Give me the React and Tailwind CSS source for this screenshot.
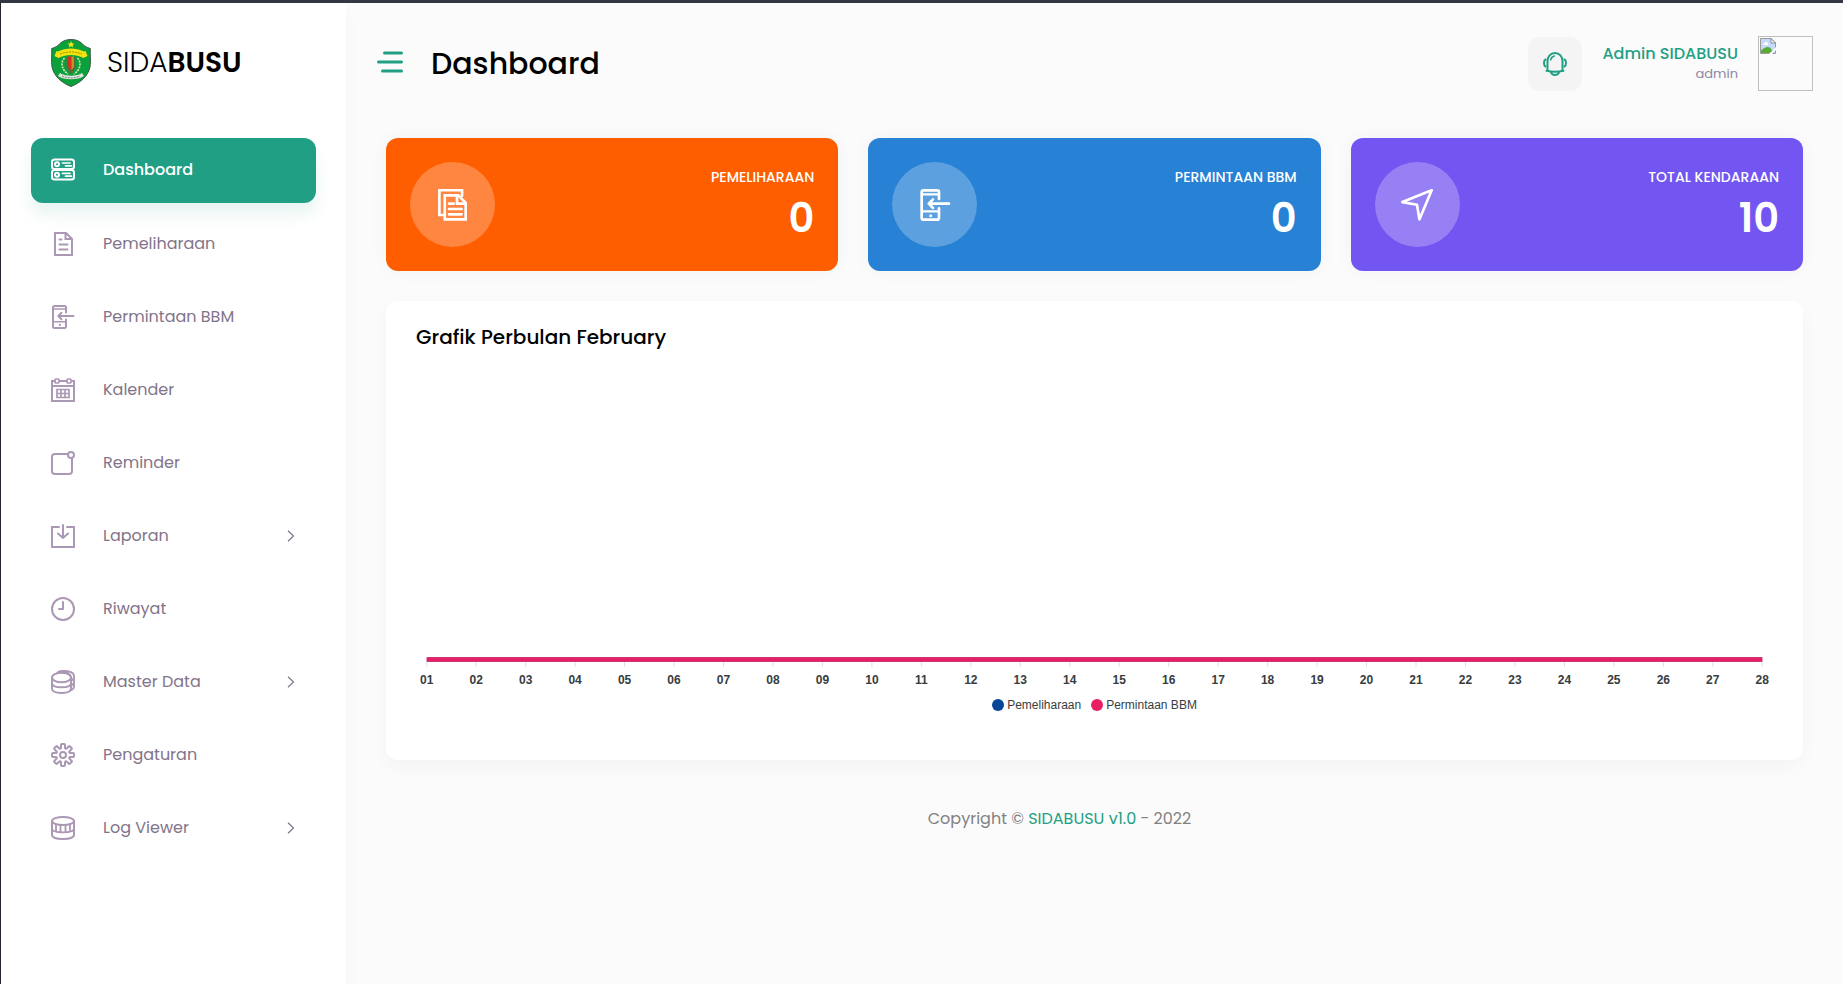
import React from "react";

const icon = {
  width: 24,
  height: 24,
  viewBox: "0 0 24 24",
  fill: "none",
  stroke: "currentColor",
  strokeWidth: 2,
  strokeLinecap: "round",
  strokeLinejoin: "round",
  "aria-hidden": true,
};

function ServerIcon() {
  return (
    <svg {...icon}>
      <rect x="1" y="1.500" width="22" height="9.500" rx="2.500" />
      <rect x="1" y="12" width="22" height="9.500" rx="2.500" />
      <circle cx="6" cy="6.300" r="2" />
      <circle cx="6" cy="16.700" r="2" />
      <path d="M11.500 5H19M14.500 7.800H20.500M11.500 15.400H19M14.500 18.200H20.500" strokeWidth="1.700" />
    </svg>
  );
}

function FileIcon() {
  return (
    <svg {...icon}>
      <path d="M4 1H15L21 7V23H4Z M14.500 1V7H21" strokeLinejoin="miter" />
      <path d="M8.500 7.500H10.500M8.500 12.500H16.500M8.500 17.500H16.500" />
    </svg>
  );
}

function FilesIcon() {
  return (
    <svg {...icon} width="32" height="32" strokeLinejoin="miter">
      <path d="M5.500 19.500H1.800V.8H18.800V5" />
      <path d="M5.800 4.800H16L21.500 10.300V22.800H5.800Z" />
      <path d="M15 5V11H21" />
      <path d="M9 11H12.500M9 15H18.500M9 19H18.500" />
    </svg>
  );
}

function PhoneInIcon({ size = 24 }) {
  return (
    <svg {...icon} width={size} height={size}>
      <path d="M15 7.500V2.500Q15 1 13.500 1H3.500Q2 1 2 2.500V21.500Q2 23 3.500 23H13.500Q15 23 15 21.500V14.500" />
      <path d="M2.500 4H14.500M2.500 16.800H14.500" strokeWidth="1.600" />
      <path d="M22.500 11H7.500M10.500 7.800L7.300 11L10.500 14.200" />
      <circle cx="8.800" cy="20" r=".6" strokeWidth="1.100" />
    </svg>
  );
}

function CalendarIcon() {
  return (
    <svg {...icon} strokeLinejoin="miter">
      <path d="M3.500 3H1V23H23V3H20.500M8.500 3H15.500M1 8H23" />
      <rect x="4" y="1" width="4" height="4" rx="1" strokeWidth="1.700" />
      <rect x="16" y="1" width="4" height="4" rx="1" strokeWidth="1.700" />
      <path d="M6 11.500H18V19.500H6ZM6 15.500H18M10 11.500V19.500M14 11.500V19.500" strokeWidth="1.700" />
    </svg>
  );
}

function ReminderIcon() {
  return (
    <svg {...icon}>
      <path d="M16.500 3H4Q1 3 1 6V20Q1 23 4 23H18Q21 23 21 20V7.500" />
      <circle cx="20" cy="4" r="3" />
    </svg>
  );
}

function DownloadIcon() {
  return (
    <svg {...icon} strokeLinejoin="miter">
      <path d="M8 3H1V23H23V3H16" />
      <path d="M12 1V14M7 9.500L12 14L17 9.500" />
    </svg>
  );
}

function ClockIcon() {
  return (
    <svg {...icon}>
      <circle cx="12" cy="12" r="11" />
      <path d="M12 5V12H8" />
    </svg>
  );
}

function CoinsIcon() {
  return (
    <svg {...icon} strokeWidth="1.900">
      <ellipse cx="10.500" cy="7.500" rx="9.500" ry="4.800" />
      <path d="M1 7.500V18.500C1 21.300 5 23 10.500 23S20 21.300 20 18.500V7.500" />
      <path d="M1 13C1 15.600 5 17.300 10.500 17.300S20 15.600 20 13" />
      <path d="M6.500 2.500C9 .7 13 .6 16.500 1.200C20.500 1.900 23 3.700 23 6V16.500C23 18.300 21.500 19.600 19.700 20.400M20 10.700C22 9.800 23 8.600 23 7M20 15.600C22 14.700 23 13.500 23 12M12 2.700C16 2.200 19.500 4 20 7.500" />
    </svg>
  );
}

function GearIcon() {
  const angles = [0, 45, 90, 135, 180, 225, 270, 315];
  return (
    <svg {...icon}>
      <circle cx="12" cy="12" r="3" />
      {angles.map((a) => (
        <path
          key={a}
          transform={`rotate(${a} 12 12)`}
          d="M9.300 5.600L10 4.900V1.900Q10 1 10.900 1H13.100Q14 1 14 1.900V4.900L14.700 5.600"
        />
      ))}
    </svg>
  );
}

function DatabaseIcon() {
  return (
    <svg {...icon}>
      <ellipse cx="12" cy="5" rx="11" ry="4" />
      <path d="M1 5V19C1 21.300 5.500 23 12 23S23 21.300 23 19V5" />
      <path d="M1 12.500C1 14.800 5.500 16.300 12 16.300S23 14.800 23 12.500M9.500 9.500V16M14.500 9.500V16M5 8.500V14.500M19 8.500V14.500" strokeWidth="1.800" />
    </svg>
  );
}

function SendIcon() {
  return (
    <svg {...icon} width="32" height="32">
      <path d="M23 1L1 9.800L12 11.800L13.800 22.800Z" />
    </svg>
  );
}

function BellIcon() {
  return (
    <svg {...icon}>
      <path d="M4.500 18.500V9C4.500 4.500 7.500 1 12 1S19.500 4.500 19.500 9V18.500" />
      <path d="M3.500 18.700C9 20 15 20 20.500 18.700" />
      <path d="M8 20C8.500 22 10 23 12 23S15.500 22 16 20" />
      <path d="M7.700 8C8 6 9.300 4.500 11.300 4" strokeWidth="1.500" />
      <path d="M2.500 7.500Q1 8.200 1 11T2.500 14.500M21.500 7.500Q23 8.200 23 11T21.500 14.500" />
    </svg>
  );
}

function Chevron() {
  return (
    <svg className="mr-px" width="8" height="12" viewBox="0 0 8 12" fill="none" stroke="currentColor" strokeWidth="1.200" aria-hidden="true">
      <path d="M1 .8L6.500 6L1 11.200" />
    </svg>
  );
}

function Shield() {
  return (
    <svg width="40" height="48" viewBox="0 0 40 48" aria-hidden="true">
      <path
        d="M20 .5C24 .5 28 1.500 31 4.500C32.500 6.500 35.500 8.500 39.300 9.500C39 16 40 22 39 28C37 37.500 29 44 20 47.500C11 44 3 37.500 1 28C0 22 1 16 .7 9.500C4.500 8.500 7.500 6.500 9 4.500C12 1.500 16 .5 20 .5Z"
        fill="#0aa03c"
        stroke="#3f5a45"
      />
      <path d="M20 2L21 4.500L23.500 4.600L21.600 6.200L22.300 8.600L20 7.200L17.700 8.600L18.400 6.200L16.500 4.600L19 4.500Z" fill="#f6e814" />
      <path d="M7 12.500C15 8.500 25 8.500 33 12.500L34.500 12L36.500 17L32.500 19C25 15 15 15 7.500 19L3.500 17L5.500 12Z" fill="#f3e30c" />
      <path d="M9 15C16 12.300 24 12.300 31 15" fill="none" stroke="#9a9400" strokeWidth="1" strokeDasharray="2 1" />
      <path d="M13.500 19C9 24 11 31 17 35M26.500 19C31 24 29 31 23 35" fill="none" stroke="#dbe8b4" strokeWidth="1.600" strokeDasharray="2 1" />
      <path d="M15.500 18H24.500V26C24.500 30 22.500 33 20 35C17.500 33 15.500 30 15.500 26Z" fill="#5c6a35" />
      <path d="M17.200 17.500H20.500V31L17.200 28Z" fill="#e22b24" />
      <path d="M20.500 17.500H23V28L20.500 31Z" fill="#b99a1c" />
      <path d="M8 35.500C14 39.500 26 39.500 32 35.500" fill="none" stroke="#dfe3de" strokeWidth="3.500" />
      <path d="M11 37C16 39.500 24 39.500 29 37" fill="none" stroke="#7c837d" strokeWidth="1" strokeDasharray="2 1" />
    </svg>
  );
}

function BrokenImage() {
  return (
    <svg width="16" height="16" viewBox="0 0 16 16" aria-hidden="true">
      <path d="M.5 .5H11L15.500 5V15.500H.5Z" fill="#c5dafa" stroke="#9b9b9b" />
      <path d="M3 6.500Q3 5 4.500 5Q5 3.500 6.300 4Q8 4.300 7.700 5.500Q8.700 6 8 7H3.300Z" fill="#fff" />
      <path d="M1 15V12.500Q6 7.500 10 9.500L14 15Z" fill="#57ab36" />
      <path d="M11 .5V5H15.500Z" fill="#fff" stroke="#8a8a8a" />
      <path d="M8.500 16.500L16.500 8.500V11.500L11.500 16.500Z" fill="#fbfbfb" />
    </svg>
  );
}

const navItems = [
  { label: "Dashboard", Icon: ServerIcon, active: true },
  { label: "Pemeliharaan", Icon: FileIcon },
  { label: "Permintaan BBM", Icon: PhoneInIcon },
  { label: "Kalender", Icon: CalendarIcon },
  { label: "Reminder", Icon: ReminderIcon },
  { label: "Laporan", Icon: DownloadIcon, nested: true },
  { label: "Riwayat", Icon: ClockIcon },
  { label: "Master Data", Icon: CoinsIcon, nested: true },
  { label: "Pengaturan", Icon: GearIcon },
  { label: "Log Viewer", Icon: DatabaseIcon, nested: true },
];

function Sidebar() {
  return (
    <aside className="w-[346px] shrink-0 border-l border-[#23252e] bg-white pb-8 shadow-[0_12px_18px_rgba(0,0,0,0.025)]">
      <a href="#" className="flex h-[105px] items-center gap-4 pt-[15px] pl-[50px] text-[28px] leading-none text-black">
        <Shield />
        <span>
          <span className="font-light">SIDA</span>
          <span className="font-semibold">BUSU</span>
        </span>
      </a>
      <nav className="mt-[30px] flex flex-col gap-2 px-[30px]">
        {navItems.map(({ label, Icon, active, nested }) => (
          <a
            key={label}
            href="#"
            className={
              active
                ? "flex h-[65px] items-center rounded-xl bg-[#219f84] px-5 pb-0.5 text-white shadow-[0_12px_15px_rgba(33,159,132,0.1)]"
                : "flex h-[65px] items-center rounded-xl px-5 text-[#827489]"
            }
          >
            <span className={active ? "text-white" : "text-[#ab98b4]"}>
              <Icon />
            </span>
            <span className={active ? "ml-7 flex-1 text-base font-medium" : "ml-7 flex-1 text-base"}>{label}</span>
            {nested && <Chevron />}
          </a>
        ))}
      </nav>
    </aside>
  );
}

function Header() {
  return (
    <header className="flex h-[105px] items-center pt-5 pr-[30px] pb-1 pl-[31px]">
      <button type="button" aria-label="Toggle menu" className="pb-1 text-[#219f84]">
        <svg width="26" height="22" viewBox="0 0 26 22" fill="none" stroke="currentColor" strokeWidth="3" strokeLinecap="round" aria-hidden="true">
          <path d="M7.500 2H24.500M1.500 11H24.500M5.500 20H24.500" />
        </svg>
      </button>
      <h1 className="ml-7 flex-1 text-[30px] leading-10 font-medium text-black">Dashboard</h1>
      <button type="button" aria-label="Notifications" className="flex size-[54px] items-center justify-center rounded-xl bg-[#f4f4f4] text-[#219f84]">
        <BellIcon />
      </button>
      <a href="#" className="ml-5 flex items-center gap-5 text-right">
        <span className="flex flex-col">
          <span className="text-base leading-5 font-medium text-[#219f84]">Admin SIDABUSU</span>
          <span className="text-[13px] leading-5 text-[#8b87a3]">admin</span>
        </span>
        <span role="img" aria-label="Profile" className="size-[55px] border border-[#c0c0c0] p-px">
          <BrokenImage />
        </span>
      </a>
    </header>
  );
}

const stats = [
  { label: "PEMELIHARAAN", value: 0, color: "bg-[#ff5e00]", icon: <FilesIcon /> },
  { label: "PERMINTAAN BBM", value: 0, color: "bg-[#2781d5]", icon: <PhoneInIcon size={32} /> },
  { label: "TOTAL KENDARAAN", value: 10, color: "bg-[#7356f1]", icon: <SendIcon /> },
];

function StatCard({ label, value, color, icon: glyph }) {
  return (
    <section className={`${color} flex h-[133px] items-center justify-between rounded-xl px-6 text-white shadow-[0_0_20px_rgba(0,0,0,0.04)]`}>
      <span className="flex size-[85px] items-center justify-center rounded-full bg-white/25">{glyph}</span>
      <div className="pt-1 text-right">
        <p className="text-sm leading-[22px] font-medium">{label}</p>
        <p className="text-[40px] leading-[60px] font-semibold">{value}</p>
      </div>
    </section>
  );
}

const days = Array.from({ length: 28 }, (_, i) => String(i + 1).padStart(2, "0"));
const dayX = (i) => `${((i + 0.5) / days.length) * 100}%`;

function Chart() {
  return (
    <section className="mt-[30px] rounded-xl bg-white pt-5 pb-[45px] shadow-[0_8px_20px_rgba(0,0,0,0.03)]">
      <h2 className="px-[30px] text-xl leading-8 font-medium text-black">Grafik Perbulan February</h2>
      <div className="px-4 pt-[17px] font-['Liberation_Sans',Arial,sans-serif]">
        <svg className="block w-full" height="325" role="img" aria-label="Grafik Perbulan February">
          {days.map((d, i) => (
            <g key={d}>
              <line x1={dayX(i)} x2={dayX(i)} y1="292" y2="297" stroke="#e0e0e0" />
              <text x={dayX(i)} y="314" textAnchor="middle" fill="#373d3f" fontSize="12" fontWeight="700">
                {d}
              </text>
            </g>
          ))}
          <line x1={dayX(0)} x2={dayX(27)} y1="289.500" y2="289.500" stroke="#a0518c" strokeWidth="5" />
          <line x1={dayX(0)} x2={dayX(27)} y1="289.500" y2="289.500" stroke="#e91e63" strokeWidth="4" />
        </svg>
        <ul className="flex h-5 items-center justify-center gap-2.5 text-xs text-[#373d3f]">
          <li className="flex items-center gap-[3px]">
            <span className="size-3 rounded-full bg-[#064699]" />
            Pemeliharaan
          </li>
          <li className="flex items-center gap-[3px]">
            <span className="size-3 rounded-full bg-[#e91e63]" />
            Permintaan BBM
          </li>
        </ul>
      </div>
    </section>
  );
}

export default function App() {
  return (
    <div className="flex min-h-screen flex-col border-t-[3px] border-[#333744] bg-[#fbfbfb] font-[Poppins,Inter,sans-serif]">
      <div className="flex flex-1">
        <Sidebar />
        <div className="min-w-0 flex-1">
          <Header />
          <main className="px-10 pt-[30px]">
            <div className="grid grid-cols-3 gap-[30px]">
              {stats.map((s) => (
                <StatCard key={s.label} {...s} />
              ))}
            </div>
            <Chart />
          </main>
          <footer className="pt-[47px] pr-[70px] pb-8 text-center text-base text-[#828282]">
            Copyright ©{" "}
            <a href="#" className="text-[#219f84]">
              SIDABUSU v1.0
            </a>{" "}
            - 2022
          </footer>
        </div>
      </div>
    </div>
  );
}
